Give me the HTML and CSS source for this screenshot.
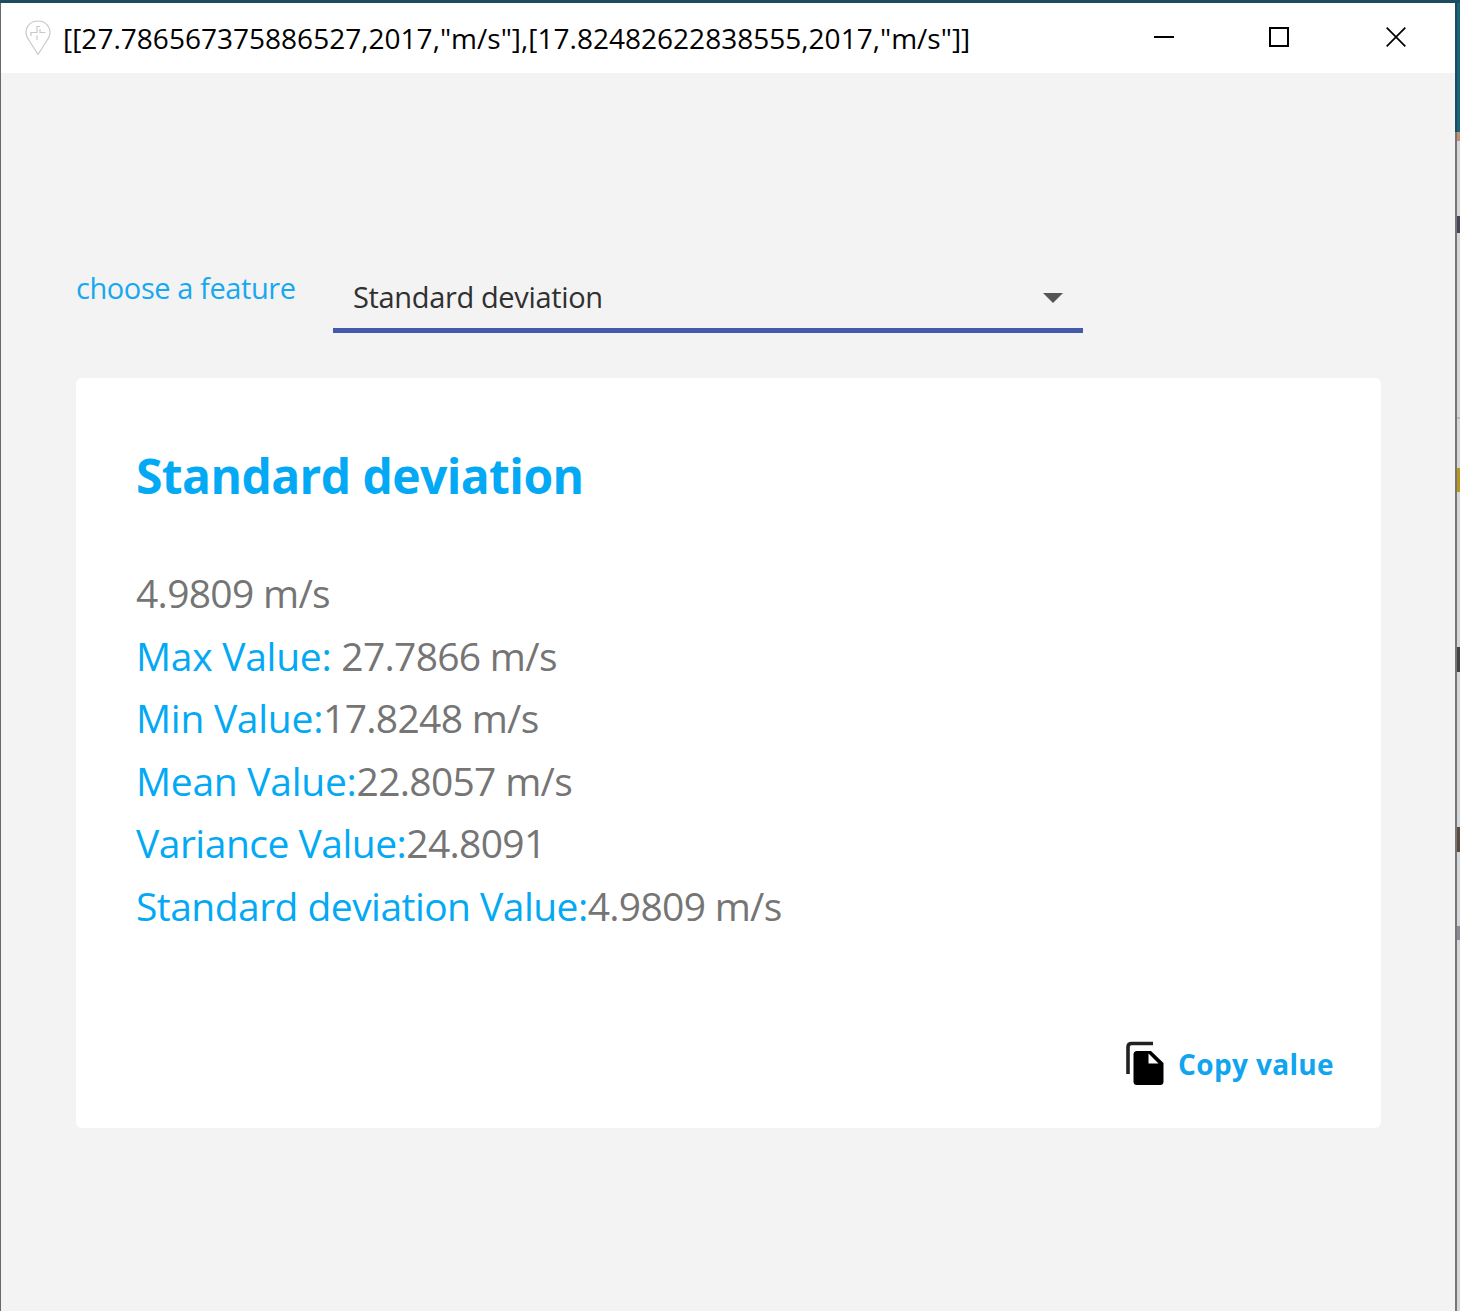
FILE: index.html
```html
<!DOCTYPE html>
<html lang="en">
<head>
<meta charset="utf-8">
<title>Statistics</title>
<link rel="stylesheet" href="styles.css">
</head>
<body>
<div class="desktop">
  <main class="window">
    <header class="titlebar">
      <svg class="pin" width="26" height="36" viewBox="0 0 26 36" fill="none" stroke="#c8c8c8" stroke-width="1.2"><path d="M13 34.5 4.4 21C2 17.5 1 15.5 1 12.500C1 6 6 1 13 1s12 5 12 11.500c0 3-1 5-3.400 8.500z"/><path d="M6 16v-3.500h6V6.500h3M15 9v3.500h5.500M12 20v-4.500"/></svg>
      <h1 class="window-title">[[27.786567375886527,2017,"m/s"],[17.82482622838555,2017,"m/s"]]</h1>
      <div class="controls">
        <svg width="20" height="20" viewBox="0 0 20 20"><path d="M0 10h20" stroke="#000" stroke-width="2"/></svg>
        <svg class="maximize" width="20" height="20" viewBox="0 0 20 20"><path d="M1 1h18v18H1z" fill="none" stroke="#000" stroke-width="2"/></svg>
        <svg width="20" height="20" viewBox="0 0 20 20"><path d="m.7.7 18.600 18.600M19.300.7.7 19.300" stroke="#000" stroke-width="1.700"/></svg>
      </div>
    </header>
    <section class="chooser">
      <span class="chooser-label">choose a feature</span>
      <div class="select">
        <span class="select-value">Standard deviation</span>
        <svg class="arrow" width="20" height="10" viewBox="0 0 20 10"><path d="M0 0h20L10 10z" fill="#555"/></svg>
      </div>
    </section>
    <section class="card">
      <h2 class="card-title">Standard deviation</h2>
      <div class="values">
        <p class="row"><span class="num">4.9809 m/s</span></p>
        <p class="row"><span class="label max">Max Value: </span><span class="num">27.7866 m/s</span></p>
        <p class="row"><span class="label min">Min Value:</span><span class="num">17.8248 m/s</span></p>
        <p class="row"><span class="label mean">Mean Value:</span><span class="num">22.8057 m/s</span></p>
        <p class="row"><span class="label variance">Variance Value:</span><span class="num">24.8091</span></p>
        <p class="row"><span class="label deviation">Standard deviation Value:</span><span class="num">4.9809 m/s</span></p>
      </div>
      <div class="copy">
        <svg width="40" height="46" viewBox="0 0 40 46"><path d="M3 33V6q0-3.500 3.500-3.500H28" fill="none" stroke="#222" stroke-width="3.600"/><path d="M12 10h14l12.500 12v18.500q0 3.500-3.500 3.500H12q-3.500 0-3.500-3.500v-27Q8.500 10 12 10z"/><path d="M23.500 12.500v10h10z" fill="#fff"/></svg>
        <span class="copy-text">Copy value</span>
      </div>
    </section>
  </main>
  <div class="edge"></div>
  <div class="backdrop"></div>
</div>
</body>
</html>
```
FILE: styles.css
```css
* { box-sizing: border-box; }
body { margin: 0; overflow: hidden; font-family: "Open Sans", "Noto Sans", sans-serif; font-weight: 400; }
svg { display: block; flex: none; }
.desktop { display: flex; width: 1460px; height: 1311px; border-top: 3px solid #1b4d5e; }
.window { width: 1455px; flex: none; background: #f3f3f3; border-left: 1px solid #65696c; }
.titlebar { display: flex; align-items: center; height: 70px; padding: 0 49px 0 24px; background: #fff; }
.window-title { margin: 0 0 0 12px; font-size: 28px; font-weight: 400; line-height: 40px; white-space: nowrap; color: #000; letter-spacing: 0.02px; }
.controls { display: flex; gap: 96px; margin-left: auto; margin-bottom: 2px; }
.maximize { margin: 0 1px 0 -1px; }
.chooser { display: flex; height: 305px; padding: 190px 0 0 75px; }
.chooser-label { width: 257px; margin-top: 5px; font-size: 29px; line-height: 40px; color: #18a8f0; white-space: nowrap; letter-spacing: -0.42px; }
.select { display: flex; align-items: center; justify-content: space-between; width: 750px; height: 70px; padding: 3px 20px 0; border-bottom: 5px solid #4359a9; }
.select-value { font-size: 29px; line-height: 40px; color: #303030; white-space: nowrap; letter-spacing: -0.35px; }
.arrow { margin-top: 1px; }
.card { display: flex; flex-direction: column; width: 1305px; height: 750px; margin-left: 75px; padding: 64px 47px 41px 60px; background: #fff; border-radius: 6px; }
.card-title { margin: 0; height: 120px; font-size: 48px; font-weight: 700; line-height: 68px; color: #03a9f4; white-space: nowrap; letter-spacing: -0.6px; }
.values { font-size: 39px; line-height: 62.5px; }
.row { margin: 0; white-space: pre; }
.label { color: #03a9f4; }
.max, .min, .mean { letter-spacing: -0.27px; }
.variance { letter-spacing: -0.5px; }
.deviation { letter-spacing: -0.54px; }
.num { color: #757575; letter-spacing: -0.7px; }
.copy { display: flex; align-items: center; gap: 13px; margin-top: auto; margin-left: auto; }
.copy-text { font-size: 28px; font-weight: 700; line-height: 40px; color: #10a5ee; white-space: nowrap; letter-spacing: 0.35px; }
.edge { width: 2px; flex: none; background: linear-gradient(#194c5e 0 129px, #747678 129px); }
.backdrop { width: 3px; flex: none; background: linear-gradient(#1b657c 0 129px, #c18f74 129px 138px, #d5d6d7 138px 213px, #454656 213px 230px, #d5d6d7 230px 414px, #bbb 414px 416px, #d5d6d7 416px 465px, #b9971f 465px 489px, #d5d6d7 489px 644px, #444 644px 669px, #d5d6d7 669px 824px, #594b40 824px 849px, #d5d6d7 849px 923px, #8b8b9b 923px 937px, #d5d6d7 937px); }
```
